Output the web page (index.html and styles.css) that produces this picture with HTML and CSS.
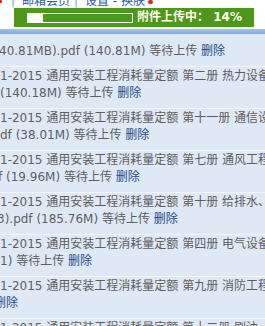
FILE: index.html
```html
<!DOCTYPE html>
<html lang="zh-CN">
<head>
<meta charset="utf-8">
<title>附件上传</title>
<link rel="stylesheet" href="styles.css">
</head>
<body>
<div class="page">
  <div class="nav">
    <div class="nav-line">
      <span class="dot dot-a"></span>
      <span class="bar">|</span>
      <a class="nav-link first">邮箱会员</a>
      <span class="bar">|</span>
      <a class="nav-link">设置</a>
      <span class="dash">-</span>
      <a class="nav-link">换肤</a>
      <span class="dot dot-b"></span>
    </div>
  </div>
  <div class="toast">
    <div class="progress"><div class="fill" style="width:14%"></div></div>
    <span class="toast-text">附件上传中：&nbsp;14%</span>
  </div>
  <div class="rule"></div>
  <div class="list">
    <div class="row first-row">
      <div class="ln tucked"><span class="gap"></span>通用安装工程消耗量定额 第一册 机械设备安装工程</div>
      <div class="ln shift1">40.81MB).pdf (140.81M) 等待上传 <a class="del">删除</a></div>
    </div>
    <div class="row">
      <div class="ln">1-2015 通用安装工程消耗量定额 第二册 热力设备安装工程</div>
      <div class="ln">(140.18M) 等待上传 <a class="del">删除</a></div>
    </div>
    <div class="row">
      <div class="ln">1-2015 通用安装工程消耗量定额 第十一册 通信设备及线路工程</div>
      <div class="ln">df (38.01M) 等待上传 <a class="del">删除</a></div>
    </div>
    <div class="row">
      <div class="ln">1-2015 通用安装工程消耗量定额 第七册 通风工程</div>
      <div class="ln shift3">f (19.96M) 等待上传 <a class="del">删除</a></div>
    </div>
    <div class="row">
      <div class="ln">1-2015 通用安装工程消耗量定额 第十册 给排水、采暖、燃气工程</div>
      <div class="ln shift2">3).pdf (185.76M) 等待上传 <a class="del">删除</a></div>
    </div>
    <div class="row">
      <div class="ln">1-2015 通用安装工程消耗量定额 第四册 电气设备安装工程</div>
      <div class="ln">1) 等待上传 <a class="del">删除</a></div>
    </div>
    <div class="row">
      <div class="ln">1-2015 通用安装工程消耗量定额 第九册 消防工程</div>
      <div class="ln shift6"><a class="del">删除</a></div>
    </div>
    <div class="row">
      <div class="ln">1-2015 通用安装工程消耗量定额 第十二册 刷油、防腐蚀、绝热工程</div>
      <div class="ln">(20.15M) 等待上传 <a class="del">删除</a></div>
    </div>
  </div>
</div>
</body>
</html>
```

FILE: styles.css
```css
html, body {
  margin: 0;
  padding: 0;
  background: #ffffff;
}

.page {
  width: 265px;
  height: 326px;
  overflow: hidden;
  font-family: "DejaVu Sans", "Noto Sans CJK SC", sans-serif;
  font-size: 12px;
}

.nav {
  height: 8px;
  overflow: hidden;
}

.nav-line {
  display: flex;
  align-items: flex-start;
  white-space: nowrap;
  margin-top: -6px;
  line-height: 14px;
  height: 14px;
  color: #2b5aa8;
}

.dot {
  display: block;
  width: 3px;
  height: 3px;
  background: #d8261c;
  border-radius: 1px;
  margin-top: 6px;
}

.dot-a {
  margin-left: -1px;
  width: 3px;
}

.dot-b {
  margin-left: 3px;
  width: 5px;
  height: 4px;
  border-radius: 2px;
}

.bar {
  color: #7f9dcc;
  width: 8px;
  text-align: center;
}

.bar:nth-of-type(2) {
  margin-left: 7px;
}

.nav-link {
  color: #2b5aa8;
}

.nav-link.first {
  margin-left: 4px;
  margin-right: 2px;
}

.bar + .nav-link {
  margin-left: 5px;
}

.dash {
  width: 12px;
  text-align: center;
  color: #2b5aa8;
}

.toast {
  display: flex;
  align-items: center;
  margin-left: 14px;
  width: 240px;
  height: 19px;
  background: #4e971d;
}

.progress {
  width: 104px;
  height: 8px;
  border: 1px solid #ffffff;
  margin-left: 13px;
  margin-top: 1px;
}

.fill {
  height: 100%;
  background: #ffffff;
}

.toast-text {
  margin-left: 4px;
  color: #fffeea;
  font-weight: bold;
  font-size: 12px;
  line-height: 19px;
  white-space: nowrap;
}

.rule {
  margin-top: 2px;
  height: 5px;
  background: linear-gradient(#a3c3ea, #7fa8dc);
}

.list {
  height: 300px;
  overflow: hidden;
  background: #dfe9f6;
}

.row {
  border-top: 1px solid #f2f6fc;
  padding: 1px 0 6px;
}

.first-row {
  margin-top: -10px;
}

.ln {
  height: 17px;
  line-height: 17px;
  white-space: nowrap;
  color: #5e5e5e;
}

.ln.tucked {
  line-height: 6px;
  overflow: hidden;
}

.gap {
  display: inline-block;
  width: 47px;
}

.shift1 {
  margin-left: -1px;
}

.shift2 {
  margin-left: -3px;
}

.shift3 {
  margin-left: -2px;
}

.shift6 {
  margin-left: -6px;
}

.del {
  color: #1f4b8c;
}
```
